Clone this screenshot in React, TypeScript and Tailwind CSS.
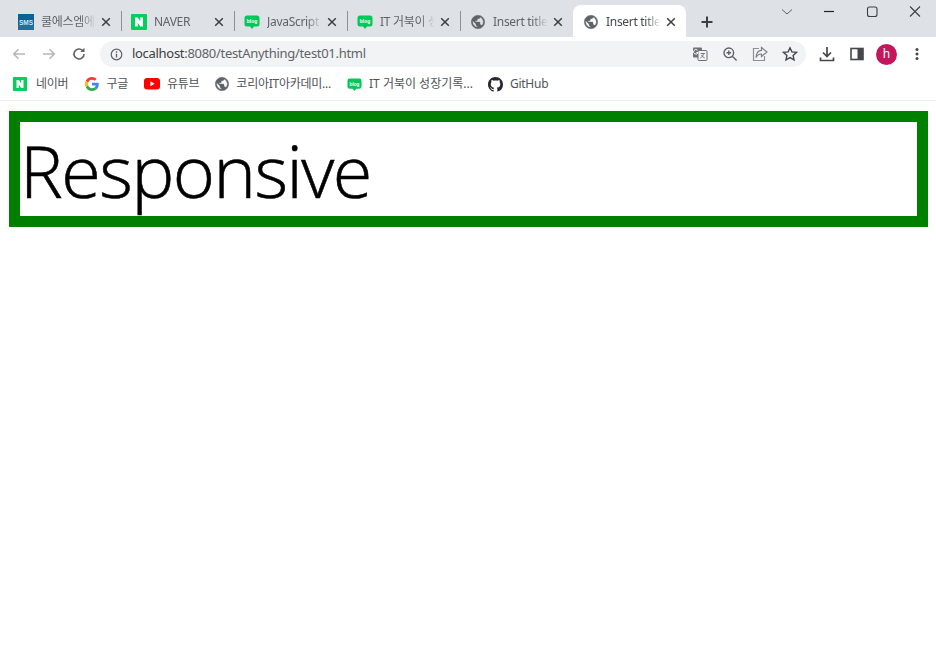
import type { ReactNode } from "react";

const uiFont = "font-['Noto_Sans','Noto_Sans_CJK_KR',sans-serif]";

function NaverIcon({ size = 14 }: { size?: number }) {
  return (
    <svg width={size} height={size} viewBox="0 0 16 16" className="shrink-0">
      <rect width="16" height="16" rx="1" fill="#03cf5d" />
      <path d="M4 3.500h2.800L9.300 7.300V3.500H12v9H9.200L6.700 8.700v3.800H4z" fill="#fff" />
    </svg>
  );
}

function SmsIcon() {
  return (
    <svg width="16" height="16" viewBox="0 0 16 16" className="shrink-0">
      <rect width="16" height="16" fill="#0b6296" />
      <rect y="11" width="16" height="5" fill="#1f6f9f" />
      <text x="8" y="10.500" textAnchor="middle" fontSize="6.500" fontWeight="700" fill="#d5e6f0" fontFamily="Liberation Sans, sans-serif">
        SMS
      </text>
    </svg>
  );
}

function BlogIcon({ size = 16 }: { size?: number }) {
  return (
    <svg width={size} height={size} viewBox="0 0 16 16" className="shrink-0">
      <path d="M3 1.500h10A2.500 2.500 0 0 1 15.500 4v6a2.500 2.500 0 0 1-2.500 2.500H10L8 15l-2-2.500H3A2.500 2.500 0 0 1 .5 10V4A2.500 2.500 0 0 1 3 1.500z" fill="#03c75a" />
      <text x="8" y="9.200" textAnchor="middle" fontSize="5" fontWeight="700" fill="#fff" fontFamily="Liberation Sans, sans-serif">
        blog
      </text>
    </svg>
  );
}

function GlobeIcon({ size = 16 }: { size?: number }) {
  return (
    <svg width={size} height={size} viewBox="0 0 24 24" className="shrink-0">
      <path
        fill="#5f6368"
        stroke="#5f6368"
        strokeWidth="0.6"
        d="M12 2C6.480 2 2 6.480 2 12s4.480 10 10 10 10-4.480 10-10S17.520 2 12 2zm-1 17.930c-3.950-.49-7-3.850-7-7.930 0-.62.080-1.210.21-1.790L9 15v1c0 1.100.9 2 2 2v1.930zm6.900-2.540c-.26-.81-1-1.390-1.900-1.390h-1v-3c0-.55-.45-1-1-1H8v-2h2c.55 0 1-.45 1-1V7h2c1.100 0 2-.9 2-2v-.41c2.930 1.190 5 4.060 5 7.410 0 2.080-.8 3.970-2.100 5.390z"
      />
    </svg>
  );
}

function GoogleIcon() {
  return (
    <svg width="14" height="14" viewBox="0 0 48 48" className="shrink-0">
      <path fill="#EA4335" d="M24 9.500c3.500 0 6.700 1.200 9.200 3.600l6.900-6.900C35.900 2.400 30.500 0 24 0 14.600 0 6.500 5.400 2.600 13.200l8 6.200C12.500 13.600 17.800 9.500 24 9.500z" />
      <path fill="#4285F4" d="M47 24.500c0-1.600-.1-3.100-.4-4.500H24v9h12.900c-.6 3-2.200 5.500-4.700 7.200l7.700 6C44.400 38 47 31.800 47 24.500z" />
      <path fill="#FBBC05" d="M10.600 28.600c-.5-1.400-.8-3-.8-4.600s.3-3.200.8-4.600l-8-6.200C.9 16.500 0 20.100 0 24s.9 7.500 2.600 10.800l8-6.200z" />
      <path fill="#34A853" d="M24 48c6.500 0 11.900-2.100 15.900-5.800l-7.700-6c-2.100 1.500-4.900 2.300-8.200 2.300-6.200 0-11.500-4.200-13.400-9.900l-8 6.200C6.500 42.600 14.600 48 24 48z" />
    </svg>
  );
}

function YoutubeIcon() {
  return (
    <svg width="16" height="12" viewBox="0 0 16 12" className="shrink-0">
      <rect width="16" height="11.500" rx="3" fill="#f00" />
      <path d="M6.400 3.300v5l4.200-2.500z" fill="#fff" />
    </svg>
  );
}

function GithubIcon() {
  return (
    <svg width="15" height="15" viewBox="0 0 16 16" className="shrink-0">
      <path
        fill="#24292f"
        d="M8 0C3.580 0 0 3.580 0 8c0 3.540 2.290 6.530 5.470 7.590.4.070.55-.17.55-.38 0-.19-.01-.82-.01-1.490-2.010.37-2.530-.49-2.690-.94-.09-.23-.48-.94-.82-1.130-.28-.15-.68-.52-.01-.53.63-.01 1.080.58 1.230.82.720 1.210 1.870.87 2.330.66.070-.52.280-.87.510-1.070-1.780-.2-3.640-.89-3.640-3.950 0-.87.310-1.590.82-2.150-.08-.2-.36-1.020.08-2.120 0 0 .67-.21 2.200.82.640-.18 1.320-.27 2-.27s1.360.09 2 .27c1.530-1.040 2.200-.82 2.200-.82.440 1.100.16 1.920.08 2.120.51.560.82 1.270.82 2.150 0 3.070-1.870 3.750-3.650 3.950.29.250.54.730.54 1.480 0 1.070-.01 1.930-.01 2.200 0 .21.150.46.550.38A8.010 8.010 0 0 0 16 8c0-4.420-3.580-8-8-8z"
      />
    </svg>
  );
}

function CloseIcon() {
  return (
    <svg width="10" height="10" viewBox="0 0 10 10" className="shrink-0">
      <path d="M1.200 1.200l7.600 7.600M8.800 1.200L1.200 8.800" stroke="#3c4043" strokeWidth="1.500" fill="none" />
    </svg>
  );
}

function Tab({ icon, title, active }: { icon: ReactNode; title: string; active?: boolean }) {
  return (
    <div className={`relative flex h-8 w-[113px] shrink-0 items-center pl-[10px] pr-[10px] pt-[2px] ${active ? "rounded-t-lg bg-white" : ""}`}>
      <div className="flex w-4 shrink-0 justify-center">{icon}</div>
      <div className={`ml-[7px] mr-[5px] flex-1 overflow-hidden whitespace-nowrap text-[12px] tracking-[-0.3px] [mask-image:linear-gradient(to_right,black_72%,transparent)] ${active ? "text-[#45474a]" : "text-[#5f6368]"}`}>
        {title}
      </div>
      <CloseIcon />
    </div>
  );
}

function Sep() {
  return <div className="-mx-[0.5px] h-5 w-px shrink-0 bg-[#8e9195]" />;
}

function Bookmark({ icon, label, className }: { icon: ReactNode; label: string; className: string }) {
  return (
    <div className={`flex items-center whitespace-nowrap text-[12px] text-[#505357] ${className}`}>
      {icon}
      <span>{label}</span>
    </div>
  );
}

function TabStrip() {
  return (
    <div className="flex h-[37px] items-end bg-[#dee1e6] pl-[8px]">
      <div className="flex items-center">
        <Tab icon={<SmsIcon />} title="쿨에스엠에스" />
        <Sep />
        <Tab icon={<NaverIcon size={16} />} title="NAVER" />
        <Sep />
        <Tab icon={<BlogIcon />} title="JavaScript 기초" />
        <Sep />
        <Tab icon={<BlogIcon />} title="IT 거북이 성장" />
        <Sep />
        <Tab icon={<GlobeIcon />} title="Insert title here" />
        <Tab icon={<GlobeIcon />} title="Insert title here" active />
      </div>
      <div className="ml-[14px] flex h-8 items-center pt-[2px]">
        <svg width="14" height="14" viewBox="0 0 14 14">
          <path d="M7 1.500v11M1.500 7h11" stroke="#3c4043" strokeWidth="2" fill="none" />
        </svg>
      </div>
      <div className="ml-auto flex self-start pt-[5px] pr-[15px]">
        <svg width="12" height="14" viewBox="0 0 12 14" className="mr-[30px]">
          <path d="M1 4.500l5 4.500 5-4.500" stroke="#5f6368" strokeWidth="1" fill="none" />
        </svg>
        <svg width="12" height="14" viewBox="0 0 12 14" className="mr-[31px]">
          <path d="M1 6.500h10" stroke="#202124" strokeWidth="1.200" fill="none" />
        </svg>
        <svg width="12" height="14" viewBox="0 0 12 14" className="mr-[31px]">
          <rect x="1.500" y="2" width="9.500" height="9.500" rx="2" stroke="#3c4043" strokeWidth="1.100" fill="none" />
        </svg>
        <svg width="12" height="14" viewBox="0 0 12 14">
          <path d="M1 1.500l10 10M11 1.500l-10 10" stroke="#3c4043" strokeWidth="1.100" fill="none" />
        </svg>
      </div>
    </div>
  );
}

function Toolbar() {
  return (
    <div className="flex h-[34px] items-center bg-white">
      <div className="flex w-[100px] shrink-0 items-center pl-[11px]">
        <svg width="16" height="16" viewBox="0 0 16 16" className="mr-[14px]">
          <path d="M14 8H3M7.500 3.200L2.700 8l4.800 4.800" stroke="#b4b6b9" strokeWidth="1.500" fill="none" />
        </svg>
        <svg width="16" height="16" viewBox="0 0 16 16" className="mr-[14px]">
          <path d="M2 8h11M8.500 3.200L13.300 8l-4.800 4.800" stroke="#b4b6b9" strokeWidth="1.500" fill="none" />
        </svg>
        <svg width="16" height="16" viewBox="0 0 16 16">
          <path d="M13 8a5 5 0 1 1-1.500-3.600" stroke="#5f6368" strokeWidth="1.600" fill="none" />
          <path d="M13.500 1.800v4.200H9.300z" fill="#5f6368" />
        </svg>
      </div>
      <div className="flex h-[26px] w-[706px] shrink-0 items-center rounded-full bg-[#f1f3f4] pl-[10px] pr-[8px]">
        <svg width="13" height="13" viewBox="0 0 14 14" className="shrink-0">
          <circle cx="7" cy="7" r="5.700" stroke="#5f6368" strokeWidth="1.300" fill="none" />
          <path d="M7 6.200v4M7 3.600v1.400" stroke="#5f6368" strokeWidth="1.400" fill="none" />
        </svg>
        <div className="ml-[9px] flex-1 whitespace-nowrap text-[13px] tracking-[-0.3px] text-[#5f6368]">
          <span className="text-[#3c4043]">localhost</span>:8080/testAnything/test01.html
        </div>
        <div className="flex items-center gap-[14px]">
          <svg width="16" height="16" viewBox="0 0 16 16">
            <rect x="1" y="1.500" width="9" height="10" rx="1" fill="#6d7074" />
            <rect x="6" y="4.500" width="9" height="10" rx="1" fill="#f1f3f4" stroke="#6d7074" strokeWidth="1" />
            <path d="M8.500 7.500h4.500M11.500 7.500c-.4 2.200-1.500 3.700-3 4.500M9.500 9c.6 1.400 1.700 2.400 3.200 3" stroke="#6d7074" strokeWidth=".9" fill="none" />
            <path d="M5.500 4.200a2.300 2.300 0 1 0 .6 2.300H4.300" stroke="#fff" strokeWidth="1" fill="none" />
          </svg>
          <svg width="16" height="16" viewBox="0 0 16 16">
            <circle cx="6.800" cy="6.800" r="4.800" stroke="#5f6368" strokeWidth="1.400" fill="none" />
            <path d="M10.300 10.300l4.300 4.300M4.500 6.800h4.600M6.800 4.500v4.600" stroke="#5f6368" strokeWidth="1.400" fill="none" />
          </svg>
          <svg width="16" height="16" viewBox="0 0 16 16">
            <path d="M7 2.500H1.500v12h11V10" stroke="#8b8e92" strokeWidth="1.200" fill="none" />
            <path d="M9.500 1.500L15 6l-5.500 4.500V8C6.500 8 5 9.500 4 11.500 4.300 7.500 6.500 4.500 9.500 4.300z" stroke="#7b7e82" strokeWidth="1.200" fill="none" />
          </svg>
          <svg width="16" height="16" viewBox="0 0 16 16">
            <path d="M8 1.800l1.900 4.100 4.500.5-3.300 3 .9 4.500L8 11.600l-4 2.300.9-4.500-3.300-3 4.500-.5z" stroke="#45474a" strokeWidth="1.400" fill="none" />
          </svg>
        </div>
      </div>
      <div className="flex flex-1 items-center pl-[13px]">
        <svg width="16" height="16" viewBox="0 0 16 16">
          <path d="M8 1v9M4 6.500L8 10.500l4-4M1.500 11.500v3h13v-3" stroke="#45474a" strokeWidth="1.700" fill="none" />
        </svg>
        <svg width="14" height="14" viewBox="0 0 14 14" className="ml-[15px]">
          <rect x="1" y="1.500" width="12" height="11" stroke="#45474a" strokeWidth="1.600" fill="none" />
          <rect x="7.500" y="1.500" width="5.500" height="11" fill="#45474a" />
        </svg>
        <div className="ml-[12px] flex h-[21px] w-[21px] items-center justify-center rounded-full bg-[#c2185b] text-[12px] leading-none text-white">
          h
        </div>
        <svg width="4" height="14" viewBox="0 0 4 14" className="ml-[18px]">
          <circle cx="2" cy="2.500" r="1.500" fill="#45474a" />
          <circle cx="2" cy="7" r="1.500" fill="#45474a" />
          <circle cx="2" cy="11.500" r="1.500" fill="#45474a" />
        </svg>
      </div>
    </div>
  );
}

function BookmarkBar() {
  return (
    <div className="flex h-[30px] items-center border-b border-[#eeeeee] bg-white pb-[3px] pl-[13px]">
      <Bookmark className="gap-[9px] tracking-[-0.25px]" icon={<NaverIcon />} label="네이버" />
      <Bookmark className="ml-[17px] gap-[7px] tracking-[-0.25px]" icon={<GoogleIcon />} label="구글" />
      <Bookmark className="ml-[16px] gap-[7px] tracking-[-0.25px]" icon={<YoutubeIcon />} label="유튜브" />
      <Bookmark className="ml-[15px] gap-[6px] tracking-[-0.25px]" icon={<GlobeIcon />} label="코리아IT아카데미..." />
      <Bookmark className="ml-[16px] gap-[7px]" icon={<BlogIcon size={15} />} label="IT 거북이 성장기록..." />
      <Bookmark className="ml-[15px] gap-[7px] tracking-[-0.25px]" icon={<GithubIcon />} label="GitHub" />
    </div>
  );
}

export default function App() {
  return (
    <div className={`h-[670px] w-[936px] overflow-hidden bg-white ${uiFont}`}>
      <TabStrip />
      <Toolbar />
      <BookmarkBar />
      <div className="pl-[9px] pr-[8px] pt-[10px]">
        <div className="h-[116px] border-[11px] border-[#008000]">
          <div className="font-['Open_Sans',sans-serif] text-[72px] font-light leading-[96px] tracking-[-1.5px] text-black [-webkit-text-stroke:0.6px_black]">Responsive</div>
        </div>
      </div>
    </div>
  );
}
